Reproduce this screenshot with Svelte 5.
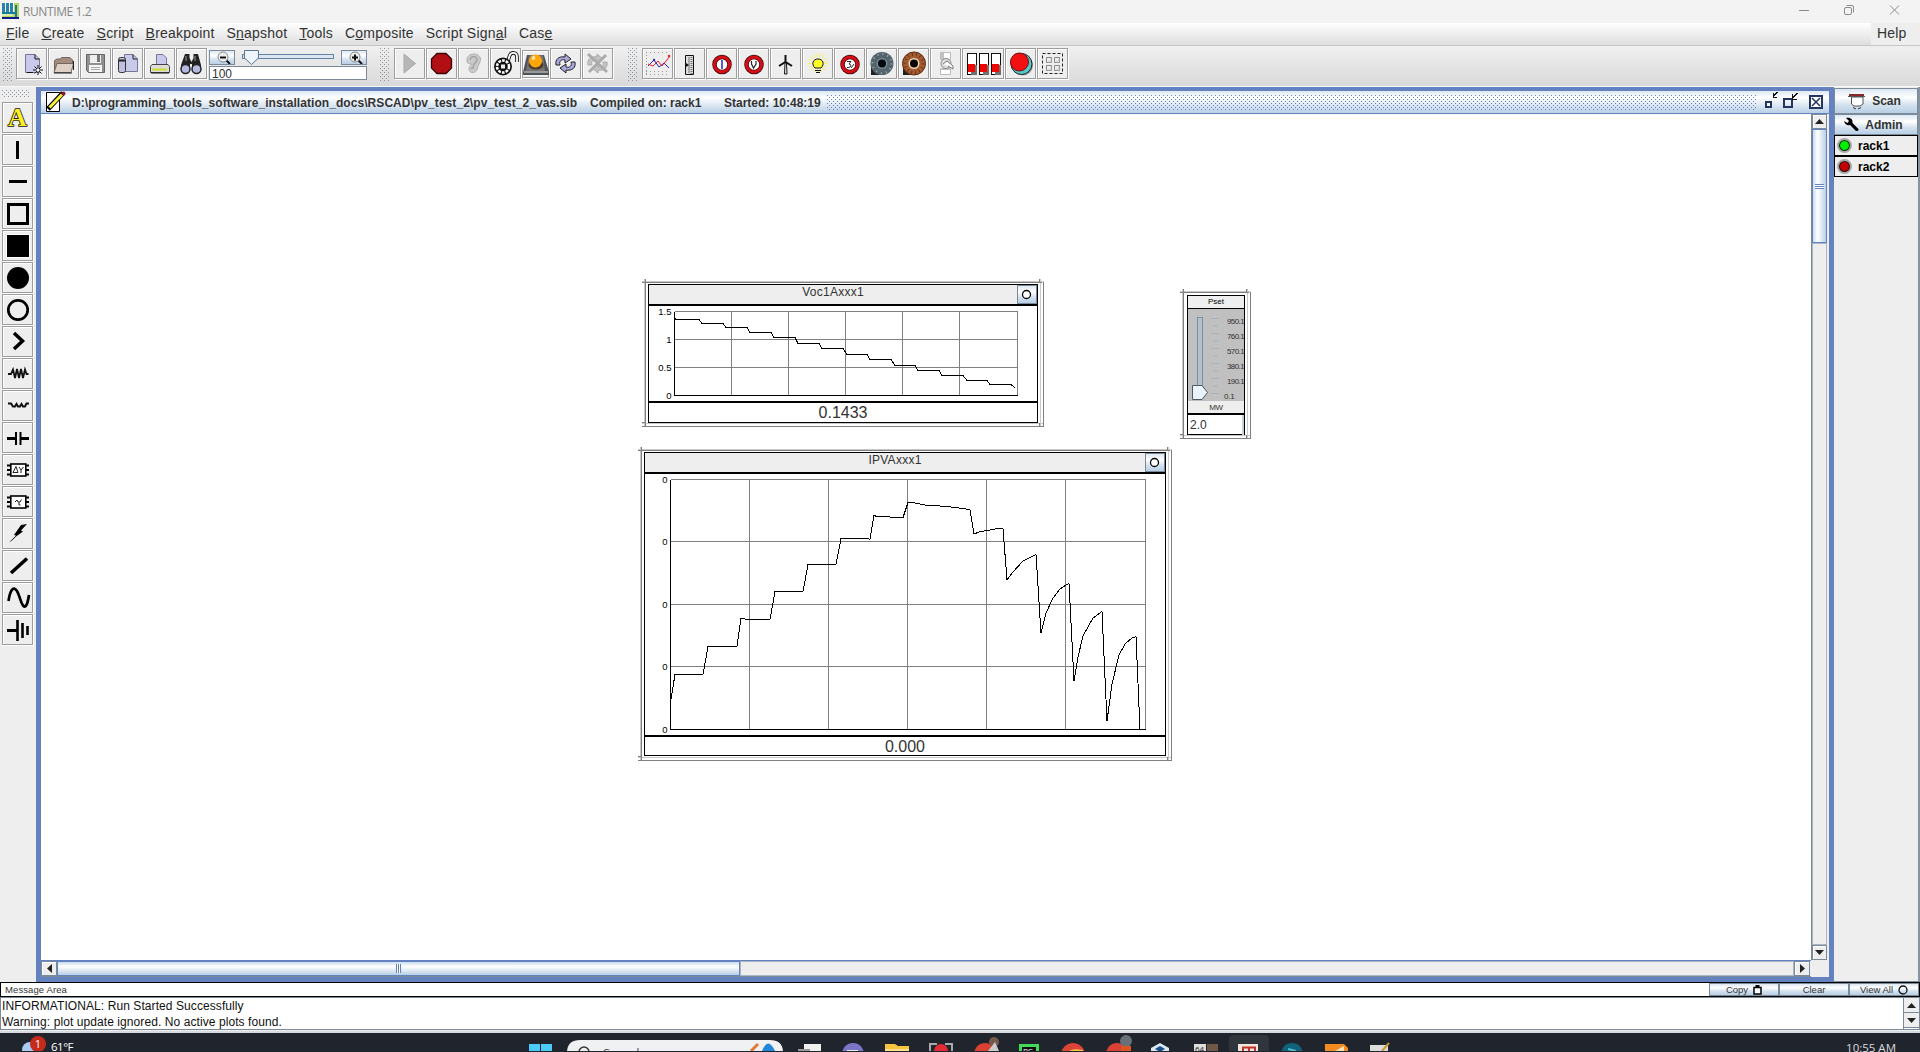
<script lang="ts">
	type Icon = { name: string; size?: string };

	const menus: [string, string, string][] = [
		['', 'F', 'ile'],
		['', 'C', 'reate'],
		['', 'S', 'cript'],
		['', 'B', 'reakpoint'],
		['S', 'n', 'apshot'],
		['', 'T', 'ools'],
		['C', 'o', 'mposite'],
		['Script Sign', 'a', 'l'],
		['Cas', 'e', '']
	];

	const icons: Record<string, string> = {
		new: '<path d="M9.500 6.500H19L23.500 11V24.500H9.500Z" fill="#c9c9ec" stroke="#777795"/><path d="M19 6.500V11H23.500M11 24.500H17" fill="none" stroke="#111"/><path d="M22 17V27M17 22H27M18.500 18.500L25.500 25.500M25.500 18.500L18.500 25.500" stroke="#111"/><circle cx="22" cy="22" r="1.500" fill="#fff"/>',
		open: '<path d="M6.500 23V12.500L9 11H12L14 9.500H22L24.500 12V15M6.500 23" fill="#a28d80" stroke="#75655c"/><path d="M6 24.500L9 15.500H25.500L23 24.500Z" fill="#ddd1c6" stroke="#75655c"/><path d="M6 25H24M25.500 13V22" stroke="#222"/>',
		save: '<path d="M6.500 6.500H24.500V24.500H8.500L6.500 22.500Z" fill="#909090" stroke="#666"/><path d="M10 7H21V15H10Z" fill="#eee"/><path d="M17 7H20V14H17Z" fill="#777"/><path d="M9 17H22V24H9Z" fill="#f5f5f5"/><path d="M11 19.500H20M11 21.500H20" stroke="#aaa"/>',
		paste: '<path d="M12.500 6.500H21L25.500 11V23.500H12.500Z" fill="#c9c9ec" stroke="#777795"/><path d="M21 6.500V11H25.500" fill="none" stroke="#222"/><rect x="6.500" y="9.500" width="7" height="15" rx="2" fill="#c0c0e2" stroke="#333"/><path d="M7 12.500H13" stroke="#222" stroke-width="2"/>',
		print: '<path d="M12.500 17V6.500H19L22.500 10V17Z" fill="#c9c9ec" stroke="#777795"/><path d="M8 16.500H24L25.500 18.500V24.500H6.500V18.500Z" fill="#ddd" stroke="#444"/><path d="M8 21.500H23" stroke="#cfe02a" stroke-width="2"/><path d="M7 25H25" stroke="#111"/>',
		find: '<path d="M9 6H13.500V10L15.500 14L17.500 10V6H22L25 17V20H16V16H14V20H5V17Z" fill="#222"/><path d="M10 8V13M19 8V13" stroke="#999"/><circle cx="9.500" cy="21" r="4.500" fill="#b5b8e2" stroke="#222" stroke-width="1.500"/><circle cx="20.500" cy="21" r="4.500" fill="#b5b8e2" stroke="#222" stroke-width="1.500"/>',
		play: '<path d="M10 6L21.500 15.500L10 25Z" fill="#b6b6b6" stroke="#aaa"/>',
		stop: '<path d="M11 5.500H20L25.500 11V20L20 25.500H11L5.500 20V11Z" fill="#b20f15" stroke="#3b0608" stroke-width="1.300"/>',
		ear: '<path d="M9 13C8 4 22 4 22.500 11C22.500 15 20 17 19.500 20C19 26 11 26 11 21C11 18 13 18 14 16C12 16 9 16 9 13Z" fill="#c9c9c9" stroke="#b0b0b0"/><path d="M12 12C13 7 19.500 8 19 12C18.500 14 16 15 15.500 18C15.500 20 14 21 13 20" fill="none" stroke="#9f9f9f" stroke-width="1.300"/>',
		lock: '<path d="M18 13L19.500 8C21 3.500 27 4 27 9V14" fill="none" stroke="#111" stroke-width="3.600"/><path d="M18 13L19.500 8C21 3.500 27 4 27 9V15" fill="none" stroke="#fff" stroke-width="1.800"/><circle cx="13" cy="18.500" r="9" fill="#111"/><circle cx="13" cy="18.500" r="6" fill="none" stroke="#fff" stroke-width="2.500" stroke-dasharray="2.700 1.100"/><rect x="11" y="16.500" width="4" height="4" fill="#eee"/>',
		lamp: '<path d="M5 5H22L27 22V25H1V22Z" fill="#4e525a"/><path d="M2 22H26" stroke="#999" stroke-width="2"/><path d="M7 5H21L23 21H4Z" fill="#77736f"/><ellipse cx="14" cy="15" rx="7.500" ry="4.500" fill="#4b3b2a"/><circle cx="13.500" cy="11" r="6.500" fill="#ffa60a"/><circle cx="11.500" cy="8" r="2" fill="#ffe2a0"/>',
		refresh: '<path d="M6 17C5 11 9 8 15 9V6L21 11L15 15V12C11 11 9 13 10 17Z" fill="#a8a8df" stroke="#222"/><path d="M25 14C26 20 22 23 16 22V25L10 20L16 16V19C20 20 22 18 21 14Z" fill="#a8a8df" stroke="#222"/>',
		norefresh: '<path d="M6 17C5 11 9 8 15 9V6L21 11L15 15V12C11 11 9 13 10 17ZM25 14C26 20 22 23 16 22V25L10 20L16 16V19C20 20 22 18 21 14Z" fill="#c4c4c4" stroke="#aaa"/><path d="M6 6L25 24M24 7L7 24" stroke="#ababab" stroke-width="3"/>',
		plot: '<path d="M4 4.500H28M4 26.500H28M4 23.500H28" stroke="#999" stroke-dasharray="1 3"/><path d="M4.500 4V27" stroke="#999" stroke-dasharray="1 2"/><path d="M6 18L12 12L17 19L22 15L27 20" fill="none" stroke="#2626c6"/><path d="M6 16L11 18L16 13L20 18L28 8" fill="none" stroke="#e32020"/><circle cx="12" cy="12" r="1.200" fill="#2626c6"/><circle cx="27" cy="8" r="1.200" fill="#e32020"/>',
		slider: '<path d="M11.500 7.500H19.500V26.500H11.500Z" fill="#ddd" stroke="#111"/><path d="M15 9.500V25" stroke="#111" stroke-dasharray="1 1"/><path d="M17.500 9V26" stroke="#777" stroke-width="2" stroke-dasharray="1 1"/><path d="M12 15L15 17L12 19Z" fill="#111"/>',
		ammeter: '<circle cx="16" cy="16.500" r="7.500" fill="#fff" stroke="#40080a" stroke-width="4.500"/><circle cx="16" cy="16.500" r="7.500" fill="none" stroke="#d70e16" stroke-width="3"/><path d="M16 12V21" stroke="#2020c0" stroke-width="1.500"/>',
		voltmeter: '<circle cx="16" cy="16.500" r="7.500" fill="#fff" stroke="#40080a" stroke-width="4.500"/><circle cx="16" cy="16.500" r="7.500" fill="none" stroke="#d70e16" stroke-width="3"/><path d="M13.500 13V16L15.500 20L18 16V13" fill="none" stroke="#222" stroke-width="1.200"/>',
		tower: '<path d="M15.500 7V15M9 18L15.500 14L22 18" fill="none" stroke="#111" stroke-width="2"/><path d="M15 15L14.500 26H17L16.500 15Z" fill="#eee" stroke="#111"/>',
		bulb: '<circle cx="16" cy="15" r="8" fill="none" stroke="#f6ee78" stroke-width="4" stroke-dasharray="1 2"/><path d="M13 20C9 16 11 11 16 11C21 11 23 16 19 20Z" fill="#ffff25" stroke="#111"/><path d="M13 22.500H19M14 24.500H18" stroke="#111"/>',
		meter3: '<circle cx="16" cy="16.500" r="7.500" fill="#fff" stroke="#40080a" stroke-width="4.500"/><circle cx="16" cy="16.500" r="7.500" fill="none" stroke="#d70e16" stroke-width="3"/><path d="M13 13.500H17L15 16C18 16 17.500 20 13 19.500M17 20L20 16" fill="none" stroke="#222"/>',
		dialgray: '<path d="M5 27V18L14 27Z" fill="#222"/><circle cx="16" cy="15.500" r="11.500" fill="#53646c"/><circle cx="16" cy="15.500" r="9.500" fill="none" stroke="#a3b0b5" stroke-width="2" stroke-dasharray="1 4"/><circle cx="16" cy="15.500" r="5.500" fill="#758a93"/><circle cx="16" cy="15.500" r="4" fill="#05090b"/>',
		dialbrown: '<path d="M5 27V18L14 27Z" fill="#222"/><circle cx="16" cy="15.500" r="11.500" fill="#a45b30" stroke="#5b2c14"/><circle cx="16" cy="15.500" r="9" fill="none" stroke="#64361f" stroke-width="3" stroke-dasharray="1 3"/><circle cx="16" cy="15.500" r="5.500" fill="#efd8ba"/><circle cx="16" cy="15.500" r="4" fill="#090605"/>',
		toggle: '<path d="M10.500 4.500H20.500V11.500H10.500ZM10.500 20.500H20.500V26.500H10.500Z" fill="#fff" stroke="#bbb"/><path d="M11 5H14V11H11ZM11 20H20V22H11Z" fill="#c2c2c2"/><circle cx="16" cy="15.500" r="5" fill="#ddd" stroke="#888"/><path d="M13 16L17 13L23 18V21L18 18" fill="#fff" stroke="#777"/>',
		switches: '<g shape-rendering="crispEdges"><path d="M5 5.500H14.500V26.500H5.500V5M17.500 26V5.500H26.500V26.500H17M29.500 26V5.500H38.500V26.500H29" fill="#fff" stroke="#111"/><path d="M9 17H15V27H9ZM21 17H27V27H21ZM33 17H39V27H33Z" fill="#707070"/><path d="M6 16H13V24H6ZM18 16H25V24H18ZM30 16H37V24H30Z" fill="#f10606"/></g>',
		button: '<circle cx="18" cy="17.500" r="10" fill="#979797"/><circle cx="16.500" cy="16" r="10.500" fill="#55c8cb" stroke="#222"/><circle cx="14.500" cy="14" r="9" fill="#f31010" stroke="#6d1216"/>',
		group: '<rect x="5.500" y="5.500" width="20" height="20" fill="none" stroke="#222" stroke-dasharray="3 2"/><path d="M9.500 9.500H14.500V14.500H9.500ZM17.500 9.500H22.500V14.500H17.500ZM9.500 17.500H14.500V22.500H9.500ZM17.500 17.500H22.500V22.500H17.500Z" fill="#eee" stroke="#888"/><path d="M11 14H14V11M19 14H22V11M11 22H14V19M19 22H22V19" fill="none" stroke="#bbb"/>',
		vline: '<path d="M15.500 7V25" stroke="#000" stroke-width="3"/>',
		hline: '<path d="M7 15.500H25" stroke="#000" stroke-width="3"/>',
		rect: '<rect x="6.500" y="6.500" width="19" height="19" fill="none" stroke="#000" stroke-width="3"/>',
		rectfill: '<path d="M4 4H28V28H4Z" fill="#fff"/><path d="M5 5H27V27H5Z"/>',
		circlefill: '<circle cx="16" cy="16" r="11"/>',
		circle: '<circle cx="16" cy="16" r="9.700" fill="none" stroke="#000" stroke-width="2.700"/>',
		arrow: '<path d="M12 7L20.500 15L12 23" fill="none" stroke="#000" stroke-width="3.500"/>',
		resistor: '<path d="M6 16H9L11 11.500L13 20L15 11L17 20L19 11L21 20L23 11.500L24.500 16H26.500" fill="none" stroke="#111" stroke-width="1.800"/>',
		inductor: '<path d="M6 13.500H9L11 16.500H13L14.500 14L16 16.500H18L19.500 14L21 16.500H23L24.500 13.500H27" fill="none" stroke="#111" stroke-width="2"/>',
		capacitor: '<path d="M5 16.500H14M18 16.500H27" stroke="#000" stroke-width="3"/><path d="M14 10V23M18.500 10V23" stroke="#000" stroke-width="2"/>',
		deltay: '<path d="M5 11.500H9M5 16H9M5 20.500H9M24 11.500H27M24 16H27M24 20.500H27" stroke="#000" stroke-width="2"/><rect x="8.800" y="10" width="15" height="12" fill="#fff" stroke="#000" stroke-width="1.600"/><path d="M11 18.500L14 12.500L16 18.500ZM17 13L19 16L21.500 13M19 16V19" fill="none" stroke="#222"/>',
		box: '<path d="M5 11.500H9M5 16H9M5 20.500H9M24 11.500H27M24 16H27M24 20.500H27" stroke="#000" stroke-width="2"/><rect x="8.800" y="10" width="15" height="12" fill="#fff" stroke="#000" stroke-width="1.600"/><path d="M13 16L15 14L16 16H18L19.500 13.500M17 16V19H18.500" fill="none" stroke="#222"/>',
		bolt: '<path d="M7 24.500L14 17.500L12 17L19 7L25 6L19 12.500L21 13.500L14 18.500L10 22.500Z"/>',
		slash: '<path d="M9 23L25 8.500" stroke="#000" stroke-width="3.500"/>',
		sine: '<path d="M6.500 19C8 9 11 3 15 9C18 14 19 23 22 24.500C25 25 26 19 27 13" fill="none" stroke="#000" stroke-width="2.700"/>',
		ground: '<path d="M5 16.500H16" stroke="#000" stroke-width="3"/><path d="M15.500 6V27M20.500 9V24M25.500 12V21" stroke="#000" stroke-width="2.600"/>'
	};

	const fileTools: Icon[] = ['new', 'open', 'save', 'paste', 'print', 'find'].map((name) => ({ name }));
	const runTools: Icon[] = [
		{ name: 'play' },
		{ name: 'stop' },
		{ name: 'ear' },
		{ name: 'lock' },
		{ name: 'lamp', size: 'small' },
		{ name: 'refresh' },
		{ name: 'norefresh' }
	];
	const partTools: Icon[] = [
		{ name: 'plot' },
		{ name: 'slider' },
		{ name: 'ammeter' },
		{ name: 'voltmeter' },
		{ name: 'tower' },
		{ name: 'bulb' },
		{ name: 'meter3' },
		{ name: 'dialgray' },
		{ name: 'dialbrown' },
		{ name: 'toggle' },
		{ name: 'switches', size: 'wide' },
		{ name: 'button' },
		{ name: 'group' }
	];
	const drawTools = [
		'letter', 'vline', 'hline', 'rect', 'rectfill', 'circlefill', 'circle', 'arrow', 'resistor',
		'inductor', 'capacitor', 'deltay', 'box', 'bolt', 'slash', 'sine', 'ground'
	];

	// points are in pixels of the plot area, measured from its top left corner
	const plots = [
		{
			cls: 'voc',
			title: 'Voc1Axxx1',
			value: '0.1433',
			w: 402,
			h: 148,
			area: [388, 95],
			box: [25.5, 5.5, 368.5, 89.5],
			cols: [82.5, 139.5, 196.5, 253.5, 310.5],
			rows: [
				[5.5, '1.5'],
				[33.5, '1'],
				[61.5, '0.5'],
				[89.5, '0']
			],
			line: '25,12.500 28,13.500 50,13.500 53,17.500 74,17.500 77,21.500 98,21.500 101,26.500 122,26.500 125,31.500 146,31.500 149,37.500 170,37.500 173,42.500 194,42.500 198,48.500 218,48.500 221,53.500 242,53.500 246,59.500 266,59.500 269,64.500 290,64.500 293,69.500 314,69.500 318,74.500 338,74.500 341,78.500 362,78.500 366,81.500'
		},
		{
			cls: 'ipv',
			title: 'IPVAxxx1',
			value: '0.000',
			w: 534,
			h: 314,
			area: [520, 261],
			box: [25.5, 5.5, 500.5, 255.5],
			cols: [104.5, 183.5, 262.5, 341.5, 420.5],
			rows: [
				[5.5, '0'],
				[67.5, '0'],
				[130.5, '0'],
				[192.5, '0'],
				[255.5, '0']
			],
			line: '26,225 30,200.500 58,200.500 63,172.500 92,172.500 96,144.500 104,145.500 125,145.500 130,117.500 158,117.500 163,90.500 191,90.500 196,64.500 223,64.500 225,65.500 229,41.500 232,42.500 258,43.500 263,28.500 268,28.500 280,31 302,32.500 325,35.500 329,60 334,58 353,54.500 358,54.500 362,106 368,98 378,87 391,80.500 396,159 401,139 408,124 415,115 421,111 424,109.500 429,207 433,183 438,162 448,144 457,137.500 462,247 467,210 474,181 480,170 487,164 491,162.500 495,255.500'
		}
	];

	const pset = ['950.1', '760.1', '570.1', '380.1', '190.1', '0.1'];
</script>

{#snippet tool(icon: Icon)}
	<button class="tool {icon.size ?? ''}" aria-label={icon.name}>
		<svg>{@html icons[icon.name]}</svg>
	</button>
{/snippet}

{#snippet handles(w: number, h: number)}
	<svg class="handles" width={w} height={h} shape-rendering="crispEdges">
		<g fill="none">
			<path d="M0 2.500H{w}M2.500 0V{h}M{w - 3.5} 0V{h}M0 {h - 3.5}H{w}" stroke="#c8c8c8" />
			<path d="M0 3.500H{w - 2}M3.500 0V{h}M{w - 0.5} 3V{h}M0 {h - 0.5}H{w}" stroke="#808080" />
			<path d="M{w - 4.5} 0V4M0 {h - 4.5}H4M{w - 4.5} {h - 4}V{h}" stroke="#808080" />
		</g>
	</svg>
{/snippet}

{#snippet tri(dir: string)}
	<svg class="tri {dir}" width="9" height="5"><path d="M0 5L4.500 0L9 5Z" fill="#222" /></svg>
{/snippet}

<div class="screen">
	<header class="caption">
		<svg width="18" height="19">
			<path d="M0 0H17V16H0Z" fill="#b9d65a" />
			<path d="M0 0H12V10H0Z" fill="#2b82a8" />
			<path d="M3.500 0V10M7.500 0V10M11.500 0V9M0 12H11" stroke="#fff" />
			<path d="M0 10H13M14 2V15" stroke="#187d9c" stroke-width="2" />
			<path d="M0 15H17" stroke="#101a8c" stroke-width="2" />
		</svg>
		<span>RUNTIME 1.2</span>
		<div class="wincontrols">
			<svg width="110" height="20" fill="none" stroke="#8b8b8b">
				<path d="M5 10.500H15M96 5.500L105 14.500M105 5.500L96 14.500" />
				<rect x="50.500" y="7.500" width="7" height="7" rx="1.500" />
				<path d="M52.500 5.500H58Q59.500 5.500 59.500 7V12.500" />
			</svg>
		</div>
	</header>

	<nav class="menubar">
		{#each menus as [before, key, after]}
			<span>{before}<u>{key}</u>{after}</span>
		{/each}
		<span class="help">Help</span>
	</nav>

	<div class="toolbars">
		<div class="grip"></div>
		{#each fileTools as icon}
			{@render tool(icon)}
		{/each}
		<div class="zoom">
			<div class="zoomrow">
				<button class="metal mag" aria-label="zoom out">
					<svg width="24" height="13">
						<path d="M16 9L20 13" stroke="#111" stroke-width="2" />
						<circle cx="13" cy="6" r="5" fill="#eee" stroke="#888" />
						<path d="M10 6.500H16" stroke="#111" stroke-width="2" />
					</svg>
				</button>
				<svg width="106" height="15">
					<rect x="7.500" y="4.500" width="91" height="4" fill="#dbe6f2" stroke="#6382a3" />
					<path d="M9.500 .5H23.500V8L16.500 14.500L9.500 8Z" fill="#edf4fb" stroke="#5d7690" />
				</svg>
				<button class="metal mag" aria-label="zoom in">
					<svg width="24" height="13">
						<path d="M16 9L20 13" stroke="#111" stroke-width="2" />
						<circle cx="13" cy="6" r="5" fill="#eee" stroke="#888" />
						<path d="M10 6.500H16M13 3.500V9.500" stroke="#111" stroke-width="2" />
					</svg>
				</button>
			</div>
			<div class="zoomvalue">100</div>
		</div>
		<div class="grip second"></div>
		{#each runTools as icon}
			{@render tool(icon)}
		{/each}
		<div class="grip third"></div>
		{#each partTools as icon}
			{@render tool(icon)}
		{/each}
	</div>

	<main>
		<aside class="palette">
			<div class="palettegrip"></div>
			{#each drawTools as name}
				<button class="tool" aria-label={name}>
					{#if name === 'letter'}
						<span class="letter">A</span>
					{:else}
						<svg>{@html icons[name]}</svg>
					{/if}
				</button>
			{/each}
		</aside>

		<section class="frame">
			<div class="frametitle">
				<svg width="22" height="22">
					<path d="M.500 1.500H13.500V20.500H.500Z" fill="#fff" stroke="#000" />
					<path d="M2 18L17 2" stroke="#000" stroke-width="5" />
					<path d="M3.500 16.500L16 3.500" stroke="#f5ef3c" stroke-width="3" />
					<circle cx="17.500" cy="2.500" r="2" fill="#8b1830" />
				</svg>
				<b class="path">D:\programming_tools_software_installation_docs\RSCAD\pv_test_2\pv_test_2_vas.sib</b>
				<b class="compiled">Compiled on: rack1</b>
				<b>Started: 10:48:19</b>
				<div class="dots"></div>
				<svg width="64" height="20" fill="none" stroke="#223460" shape-rendering="crispEdges">
					<path d="M4 10H9V15H4Z" stroke-width="2" fill="#fff" />
					<path d="M22 7H30V15H22Z" stroke-width="2" />
					<path d="M15.500 0L11 4.500M11.500 1V5H15M35.500 1L30 6.500M30.500 2V7H35" stroke="#111" />
					<path d="M48 4H60V16H48Z" stroke-width="2" fill="#fff" />
					<path d="M50 6L58 14M58 6L50 14" stroke-width="1.500" shape-rendering="auto" />
				</svg>
			</div>
			<div class="view">
				<div class="canvas">
					{#each plots as p}
						<div class="item {p.cls}" style="width: {p.w}px; height: {p.h}px">
							{@render handles(p.w, p.h)}
							<div class="panel">
								<div class="head">
									<span>{p.title}</span>
									<button class="metal ring" aria-label="options">
										<svg width="18" height="18"><circle cx="8.500" cy="8.500" r="4" fill="#fff" stroke="#000" stroke-width="1.300" /></svg>
									</button>
								</div>
								<svg class="chart" width={p.area[0]} height={p.area[1]}>
									<g shape-rendering="crispEdges" fill="none">
										{#each p.cols as x}
											<path d="M{x} {p.box[1]}V{p.box[3]}" stroke="#808080" />
										{/each}
										{#each p.rows as [y]}
											<path d="M{p.box[0]} {y}H{p.box[2]}" stroke="#808080" />
										{/each}
										<path d="M{p.box[2]} {p.box[1]}V{p.box[3]}" stroke="#808080" />
										<path d="M{p.box[0]} {p.box[1]}V{p.box[3]}H{p.box[2]}" stroke="#000" />
										<polyline points={p.line} stroke="#000" />
									</g>
									{#each p.rows as [y, label]}
										<text x={p.box[0] - 3} y={Number(y) + 3.5} text-anchor="end">{label}</text>
									{/each}
								</svg>
								<div class="value">{p.value}</div>
							</div>
						</div>
					{/each}

					<div class="item pset" style="width: 71px; height: 150px">
						{@render handles(71, 150)}
						<div class="panel">
							<div class="psethead">Pset</div>
							<div class="psetbody">
								<svg width="31" height="92">
									<rect x="9.500" y="8.500" width="5" height="69" fill="#b4c2cc" stroke="#7b8f9f" />
									<path d="M4.500 76.500H14L19.500 83.500L14 90.500H4.500Z" fill="#eaf2fa" stroke="#4c5a66" />
									<path d="M23 9.500H31M23 24.500H31M23 39.500H31M23 54.500H31M23 69.500H31M23 84.500H31M25 17H30M25 32H30M25 47H30M25 62H30M25 77H30" stroke="#a7b2bd" />
								</svg>
								<div class="ticks">
									{#each pset as t}
										<span>{t}</span>
									{/each}
								</div>
							</div>
							<div class="unit">MW</div>
							<div class="field">2.0</div>
						</div>
					</div>
				</div>
				<div class="vscroll">
					<div class="sbtn">{@render tri('up')}</div>
					<div class="vthumb"><i></i></div>
					<div class="track"></div>
					<div class="sbtn">{@render tri('down')}</div>
				</div>
				<div class="hscroll">
					<div class="sbtn">{@render tri('left')}</div>
					<div class="hthumb"><i></i></div>
					<div class="track"></div>
					<div class="sbtn">{@render tri('right')}</div>
				</div>
				<div class="corner"></div>
			</div>
		</section>

		<aside class="racks">
			<button class="metal scan">
				<svg width="18" height="17">
					<path d="M1 1H16V4H1Z" fill="#8a2929" />
					<path d="M0 3.500H17M3.500 4V11L6 13H12L15 11V4Z" fill="#fff" stroke="#555" />
					<path d="M2 2H15" stroke="#8a2929" stroke-width="2" />
					<path d="M5 14.500L8 16M10 16L13 14.500" stroke="#333" />
				</svg>
				Scan
			</button>
			<button class="metal admin">
				<svg width="16" height="15">
					<path d="M2 1L5 4L3.500 6L0 4C1 8 4 9 6 8L12 14Q15 14 14.500 12L8.500 6C9 3 7 0 2 1Z" />
				</svg>
				Admin
			</button>
			<div class="rack"><i class="on"></i>rack1</div>
			<div class="rack"><i></i>rack2</div>
		</aside>
	</main>

	<div class="messagebar">
		<span>Message Area</span>
		<button class="metal">
			Copy
			<svg width="9" height="10"><path d="M1 2.500H8V9H1Z" fill="#fff" stroke="#000" stroke-width="1.500" /><path d="M2.500 0H6.500V3H2.500Z" /></svg>
		</button>
		<button class="metal">Clear</button>
		<button class="metal">
			View All
			<svg width="10" height="10"><circle cx="5" cy="5" r="4" fill="none" stroke="#111" stroke-width="1.300" /></svg>
		</button>
	</div>
	<div class="messages">
		<div class="lines">
			<p>INFORMATIONAL: Run Started Successfully</p>
			<p>Warning: plot update ignored. No active plots found.</p>
		</div>
		<div class="mscroll">
			<div>{@render tri('up')}</div>
			<div>{@render tri('down')}</div>
		</div>
	</div>

	<footer class="taskbar">
		<svg class="weather" width="28" height="19">
			<circle cx="10" cy="18" r="8" fill="#a9cbf2" />
			<circle cx="18" cy="12" r="8" fill="#c42b1c" />
			<text x="18" y="16" text-anchor="middle" fill="#fff" font-size="11">1</text>
		</svg>
		<span class="temp">61°F</span>
		<svg class="apps" width="900" height="19">
			<path d="M4 12H15V19H4ZM16 12H27V19H16Z" fill="#4ccbf8" />
			<path d="M42 19Q43 8 55 8H245Q257 8 258 19Z" fill="#f0f1f3" />
			<circle cx="59" cy="20" r="5" fill="none" stroke="#333" stroke-width="1.500" />
			<text x="78" y="26" fill="#555" font-size="13">Search</text>
			<path d="M226 19L233 12" stroke="#e07a3d" stroke-width="3" />
			<path d="M237 19Q243 4 250 19Z" fill="#2387d8" />
			<path d="M279 12H296V19H279Z" fill="#f1f1f1" /><path d="M273 17H285V19H273Z" fill="#999" />
			<circle cx="328" cy="22" r="11" fill="#7b75c8" /><path d="M322 19H333" stroke="#eee" stroke-width="2" />
			<path d="M360 12H370L373 14H384V19H360Z" fill="#f5c33e" /><path d="M360 17H384V19H360Z" fill="#ffe08b" />
			<path d="M405 19V12H412M420 12H427V19" fill="none" stroke="#aaa" stroke-width="2" /><circle cx="416" cy="19" r="7" fill="#e32b35" />
			<circle cx="460" cy="22" r="11" fill="#db4034" /><circle cx="469" cy="10" r="5" fill="#76594d" /><path d="M463 19L470 10L474 19Z" fill="#ccc" />
			<path d="M494 12H514V19H494Z" fill="#42d957" /><path d="M497 15H511V19H497Z" fill="#111" />
			<text x="498" y="22" fill="#fff" font-size="8">PC</text>
			<circle cx="548" cy="23" r="12" fill="#dc4437" /><path d="M544 19Q548 16 558 18V19Z" fill="#f4c746" />
			<circle cx="592" cy="22" r="11" fill="#db4034" /><circle cx="601" cy="9" r="6" fill="#697078" /><path d="M596 19V14H606V19Z" fill="#dc5523" />
			<path d="M626 19V16L635 11L644 16V19Z" fill="#dce8f3" /><path d="M630 17L635 14L640 17L635 20Z" fill="#1b4d88" />
			<path d="M669 12H681V19H669Z" fill="#ddd" /><path d="M682 12H693V19H682Z" fill="#705847" />
			<text x="670" y="20" fill="#222" font-size="8">64</text>
			<path d="M704 19V7Q704 3 708 3H740Q744 3 744 7V19Z" fill="#30343b" />
			<path d="M713 12H733V19H713Z" fill="#f1e7df" /><path d="M718 19V15.500H730V19M724 19V15" fill="none" stroke="#c33428" stroke-width="2" />
			<circle cx="767" cy="22" r="11" fill="#11637d" /><path d="M763 17L771 19" stroke="#4fbacb" stroke-width="2" />
			<path d="M800 19V12H819L823 16V19Z" fill="#f28b22" /><path d="M810 19L819 14V19Z" fill="#ffe3bd" />
			<path d="M845 13H863V19H845Z" fill="#ddd" /><path d="M857 19L864 11" stroke="#c59a30" stroke-width="2" />
		</svg>
		<span class="clock">10:55 AM</span>
	</footer>
</div>

<style>
	:global(body) {
		margin: 0;
		overflow: hidden;
		background: #eee;
		font-family: 'Liberation Sans', Arial, sans-serif;
	}

	.screen {
		width: 1920px;
		height: 1052px;
		display: flex;
		flex-direction: column;
		overflow: hidden;
		color: #333;
		font-size: 12px;
	}

	.screen :global(*) {
		box-sizing: border-box;
	}

	svg {
		display: block;
		flex: none;
	}

	button {
		font: inherit;
		color: inherit;
		padding: 0;
		border: 0;
	}

	.metal {
		background: linear-gradient(#dde8f3 0%, #fff 35%, #d5e2ef 65%, #b8cfe5 100%);
		border: 1px solid #7a8a99;
		display: flex;
		align-items: center;
		justify-content: center;
	}

	.caption {
		height: 23px;
		flex: none;
		display: flex;
		background: #f3f3f3;
		padding: 3px 0 0 2px;
		font-family: 'Open Sans', sans-serif;
		color: #858585;
	}

	.caption span {
		margin-left: 3px;
		line-height: 17px;
		font-size: 12px;
		letter-spacing: -0.4px;
	}

	.wincontrols {
		margin: -3px 16px 0 auto;
	}

	.menubar {
		height: 23px;
		flex: none;
		display: flex;
		gap: 12px;
		padding-left: 6px;
		background: linear-gradient(#fff, #dedede);
		border-bottom: 1px solid #c6c6c6;
		font-size: 14px;
		line-height: 21px;
		letter-spacing: 0.2px;
	}

	.help {
		margin-left: auto;
		width: 49px;
		padding-left: 6px;
		background: #eee;
	}

	.toolbars {
		height: 41px;
		flex: none;
		display: flex;
		align-items: flex-start;
		gap: 1px;
		padding: 2px 0 0 3px;
		background: linear-gradient(#f0f0f0, #d9d9d9);
		border-bottom: 1px solid #f8f8f8;
	}

	.grip,
	.palettegrip,
	.dots {
		background-image: conic-gradient(at 1px 1px, transparent 75%, #8693a3 0),
			conic-gradient(at 1px 1px, transparent 75%, #8693a3 0);
		background-size: 4px 4px;
		background-position: 0 0, 2px 2px;
	}

	.grip {
		width: 10px;
		height: 34px;
		margin-right: 2px;
	}

	.grip.second {
		margin-left: 12px;
		margin-right: 3px;
	}

	.grip.third {
		margin-left: 14px;
		margin-right: 3px;
	}

	.tool {
		width: 31px;
		height: 31px;
		flex: none;
		background: #eee;
		box-shadow: inset 0 0 0 1px #9d9d9d, inset 2px 2px 0 #fff, 1px 1px 0 #fff;
	}

	.tool svg {
		width: 31px;
		height: 31px;
	}

	.tool.small {
		width: 27px;
		height: 28px;
		margin-top: 2px;
	}

	.tool.small svg {
		width: 27px;
		height: 28px;
	}

	.tool.wide,
	.tool.wide svg {
		width: 42px;
	}

	.zoom {
		width: 158px;
		margin: 2px 0 0 1px;
	}

	.zoomrow {
		display: flex;
	}

	.mag {
		width: 26px;
		height: 15px;
	}

	.zoomvalue {
		height: 14px;
		margin-top: 1px;
		padding-left: 2px;
		background: #fff;
		border: 1px solid #7a8a99;
		font-size: 12px;
		line-height: 14px;
	}

	main {
		height: 895px;
		flex: none;
		display: flex;
		background: #eee;
	}

	.palette {
		width: 36px;
		padding: 3px 0 0 2px;
		display: flex;
		flex-direction: column;
		gap: 1px;
	}

	.palettegrip {
		width: 28px;
		height: 8px;
		margin-bottom: 3px;
	}

	.letter {
		display: block;
		font: bold 26px/30px 'Liberation Serif', serif;
		text-align: center;
		color: #ffee20;
		-webkit-text-stroke: 1.6px #111;
		paint-order: stroke fill;
	}

	.frame {
		width: 1798px;
		padding: 4px 5px 5px;
		background: #6382bf;
	}

	.frametitle {
		height: 23px;
		display: flex;
		align-items: center;
		padding: 0 3px 0 5px;
		background: linear-gradient(#dce8f4, #fff 30%, #b8cfe5);
		border-bottom: 1px solid #6382bf;
		white-space: pre;
	}

	.frametitle b {
		padding-top: 1px;
	}

	.path {
		margin-left: 4px;
		width: 518px;
		letter-spacing: 0.06px;
	}

	.compiled {
		width: 134px;
	}

	.dots {
		flex: 1;
		height: 15px;
		margin-left: 6px;
		margin-right: 5px;
		background-image: conic-gradient(at 1px 1px, transparent 75%, #6382bf 0),
			conic-gradient(at 1px 1px, transparent 75%, #6382bf 0);
	}

	.view {
		display: grid;
		grid-template-columns: 1770px 18px;
		grid-template-rows: 846px 17px;
		height: 863px;
		background: #fff;
	}

	.canvas {
		position: relative;
		background: #fff;
	}

	.vscroll {
		display: flex;
		flex-direction: column;
		border-left: 1px solid #7a8a99;
		padding-right: 2px;
		background: #eee;
	}

	.hscroll {
		display: flex;
		padding-right: 1px;
		border-top: 1px solid #6382bf;
		border-bottom: 1px solid #7a8a99;
		background: #eee;
	}

	.corner {
		background: #eee;
	}

	.sbtn {
		width: 16px;
		height: 15px;
		flex: none;
		display: grid;
		place-items: center;
		border: 1px solid #7a8a99;
		background: #eee;
		box-shadow: inset 1px 1px 0 #fff;
	}

	.vscroll .sbtn {
		width: 15px;
	}

	.track {
		flex: 1;
		border: 1px solid #aab6c2;
	}

	.vthumb {
		height: 114px;
		display: grid;
		place-items: center;
		border: 1px solid #6382bf;
		background: linear-gradient(90deg, #c8dcef, #fff 35%, #b8cfe5);
	}

	.vthumb i {
		width: 9px;
		height: 5px;
		background: repeating-linear-gradient(#6382bf 0 1px, #fff 1px 2px);
	}

	.hthumb {
		width: 683px;
		display: grid;
		place-items: center;
		border: 1px solid #6382bf;
		background: linear-gradient(#c8dcef, #fff 35%, #b8cfe5);
	}

	.hthumb i {
		width: 5px;
		height: 9px;
		background: repeating-linear-gradient(90deg, #6382bf 0 1px, #fff 1px 2px);
	}

	.tri.down {
		transform: rotate(180deg);
	}

	.tri.left {
		transform: rotate(-90deg);
	}

	.tri.right {
		transform: rotate(90deg);
	}

	/* components dropped on the runtime canvas */
	.item {
		position: absolute;
		padding: 5px 6px 4px 6px;
	}

	.voc {
		left: 601px;
		top: 165px;
	}

	.ipv {
		left: 597px;
		top: 333px;
	}

	.pset {
		left: 1139px;
		top: 175px;
		padding: 6px 6px 4px 7px;
	}

	.handles {
		position: absolute;
		left: 0;
		top: 0;
	}

	.panel {
		display: flex;
		flex-direction: column;
		height: 139px;
		border: 1px solid #000;
		background: #fff;
		position: relative;
	}

	.ipv .panel {
		height: 304px;
	}

	.pset .panel {
		height: 140px;
	}

	.head {
		height: 21px;
		flex: none;
		display: flex;
		justify-content: center;
		background: #eee;
		border-bottom: 2px solid #000;
		font-size: 12px;
		line-height: 15px;
		letter-spacing: 0.25px;
		position: relative;
	}

	.head span {
		margin-right: 20px;
	}

	.ring {
		position: absolute;
		right: 0;
		top: 0;
		width: 20px;
		height: 19px;
	}

	.chart text {
		font-size: 9.5px;
		fill: #000;
	}

	.value {
		flex: 1;
		border-top: 2px solid #000;
		text-align: center;
		font-size: 16px;
		line-height: 20px;
		color: #333;
	}

	.psethead,
	.unit {
		background: #eee;
		font-size: 8px;
		text-align: center;
		flex: none;
	}

	.psethead {
		height: 13px;
		line-height: 12px;
		border-bottom: 1px solid #000;
		color: #000;
	}

	.psetbody {
		height: 92px;
		flex: none;
		display: flex;
		background: #c0c0c0;
	}

	.ticks {
		padding: 5px 0 0 8px;
		display: flex;
		flex-direction: column;
		font-size: 8px;
		line-height: 15px;
		letter-spacing: -0.6px;
	}

	.ticks span:last-child {
		margin-left: -3px;
		letter-spacing: -0.2px;
	}

	.unit {
		height: 12px;
		line-height: 13px;
		letter-spacing: -0.3px;
	}

	.field {
		flex: 1;
		border-top: 2px solid #000;
		padding-left: 2px;
		font-size: 12px;
		line-height: 21px;
		box-shadow: inset -2px 0 0 #c8d2dc;
	}

	.racks {
		width: 86px;
		padding: 1px 1px 0 0;
		border-bottom: 1px solid #7a8a99;
		box-shadow: inset -2px 0 0 #8793a0;
		font-weight: bold;
	}

	.racks button {
		width: 84px;
		gap: 6px;
		padding-right: 3px;
	}

	.scan {
		height: 26px;
	}

	.racks .admin {
		height: 21px;
		gap: 5px;
		padding-right: 5px;
	}

	.rack {
		width: 84px;
		height: 21px;
		display: flex;
		align-items: center;
		border: 1px solid #000;
		color: #000;
		padding-left: 2px;
		font-size: 12px;
	}

	.rack i {
		width: 15px;
		height: 15px;
		border-radius: 50%;
		margin-right: 6px;
		border: 2px solid #a8a8a8;
		background: #c40000;
		box-shadow: inset 0 0 0 1px #111;
	}

	.rack .on {
		background: #00f000;
	}

	.messagebar {
		height: 15px;
		flex: none;
		display: flex;
		border: 1px solid #000;
		background: #fff;
		font-size: 9.5px;
		line-height: 13px;
		letter-spacing: 0.1px;
	}

	.messagebar span {
		margin-right: auto;
		padding-left: 4px;
	}

	.messagebar button {
		width: 70px;
		gap: 5px;
	}

	.messages {
		height: 33px;
		flex: none;
		display: flex;
		border: 1px solid #7a8a99;
		background: #fff;
	}

	.lines {
		flex: 1;
		color: #111;
	}

	.lines p {
		margin: 0;
		padding-left: 1px;
		font-size: 12px;
		line-height: 17px;
		height: 16px;
		letter-spacing: 0.08px;
	}

	.mscroll {
		width: 16px;
		border-left: 1px solid #7a8a99;
	}

	.mscroll div {
		height: 15px;
		display: grid;
		place-items: center;
		background: #eee;
		border-bottom: 1px solid #7a8a99;
	}

	.taskbar {
		flex: 1;
		min-height: 0;
		margin-top: 1px;
		display: flex;
		background: #20252d;
		border-top: 2px solid #d8dadd;
		color: #fff;
		font-family: 'Open Sans', sans-serif;
		font-size: 11.5px;
	}

	.taskbar svg {
		margin-top: -1px;
	}

	.weather {
		margin-left: 20px;
	}

	.temp {
		margin: 6px 0 0 3px;
		width: 474px;
		line-height: 16px;
		letter-spacing: -0.5px;
	}

	.clock {
		margin: 7px 24px 0 auto;
		line-height: 16px;
		color: #d9dadd;
	}
</style>
